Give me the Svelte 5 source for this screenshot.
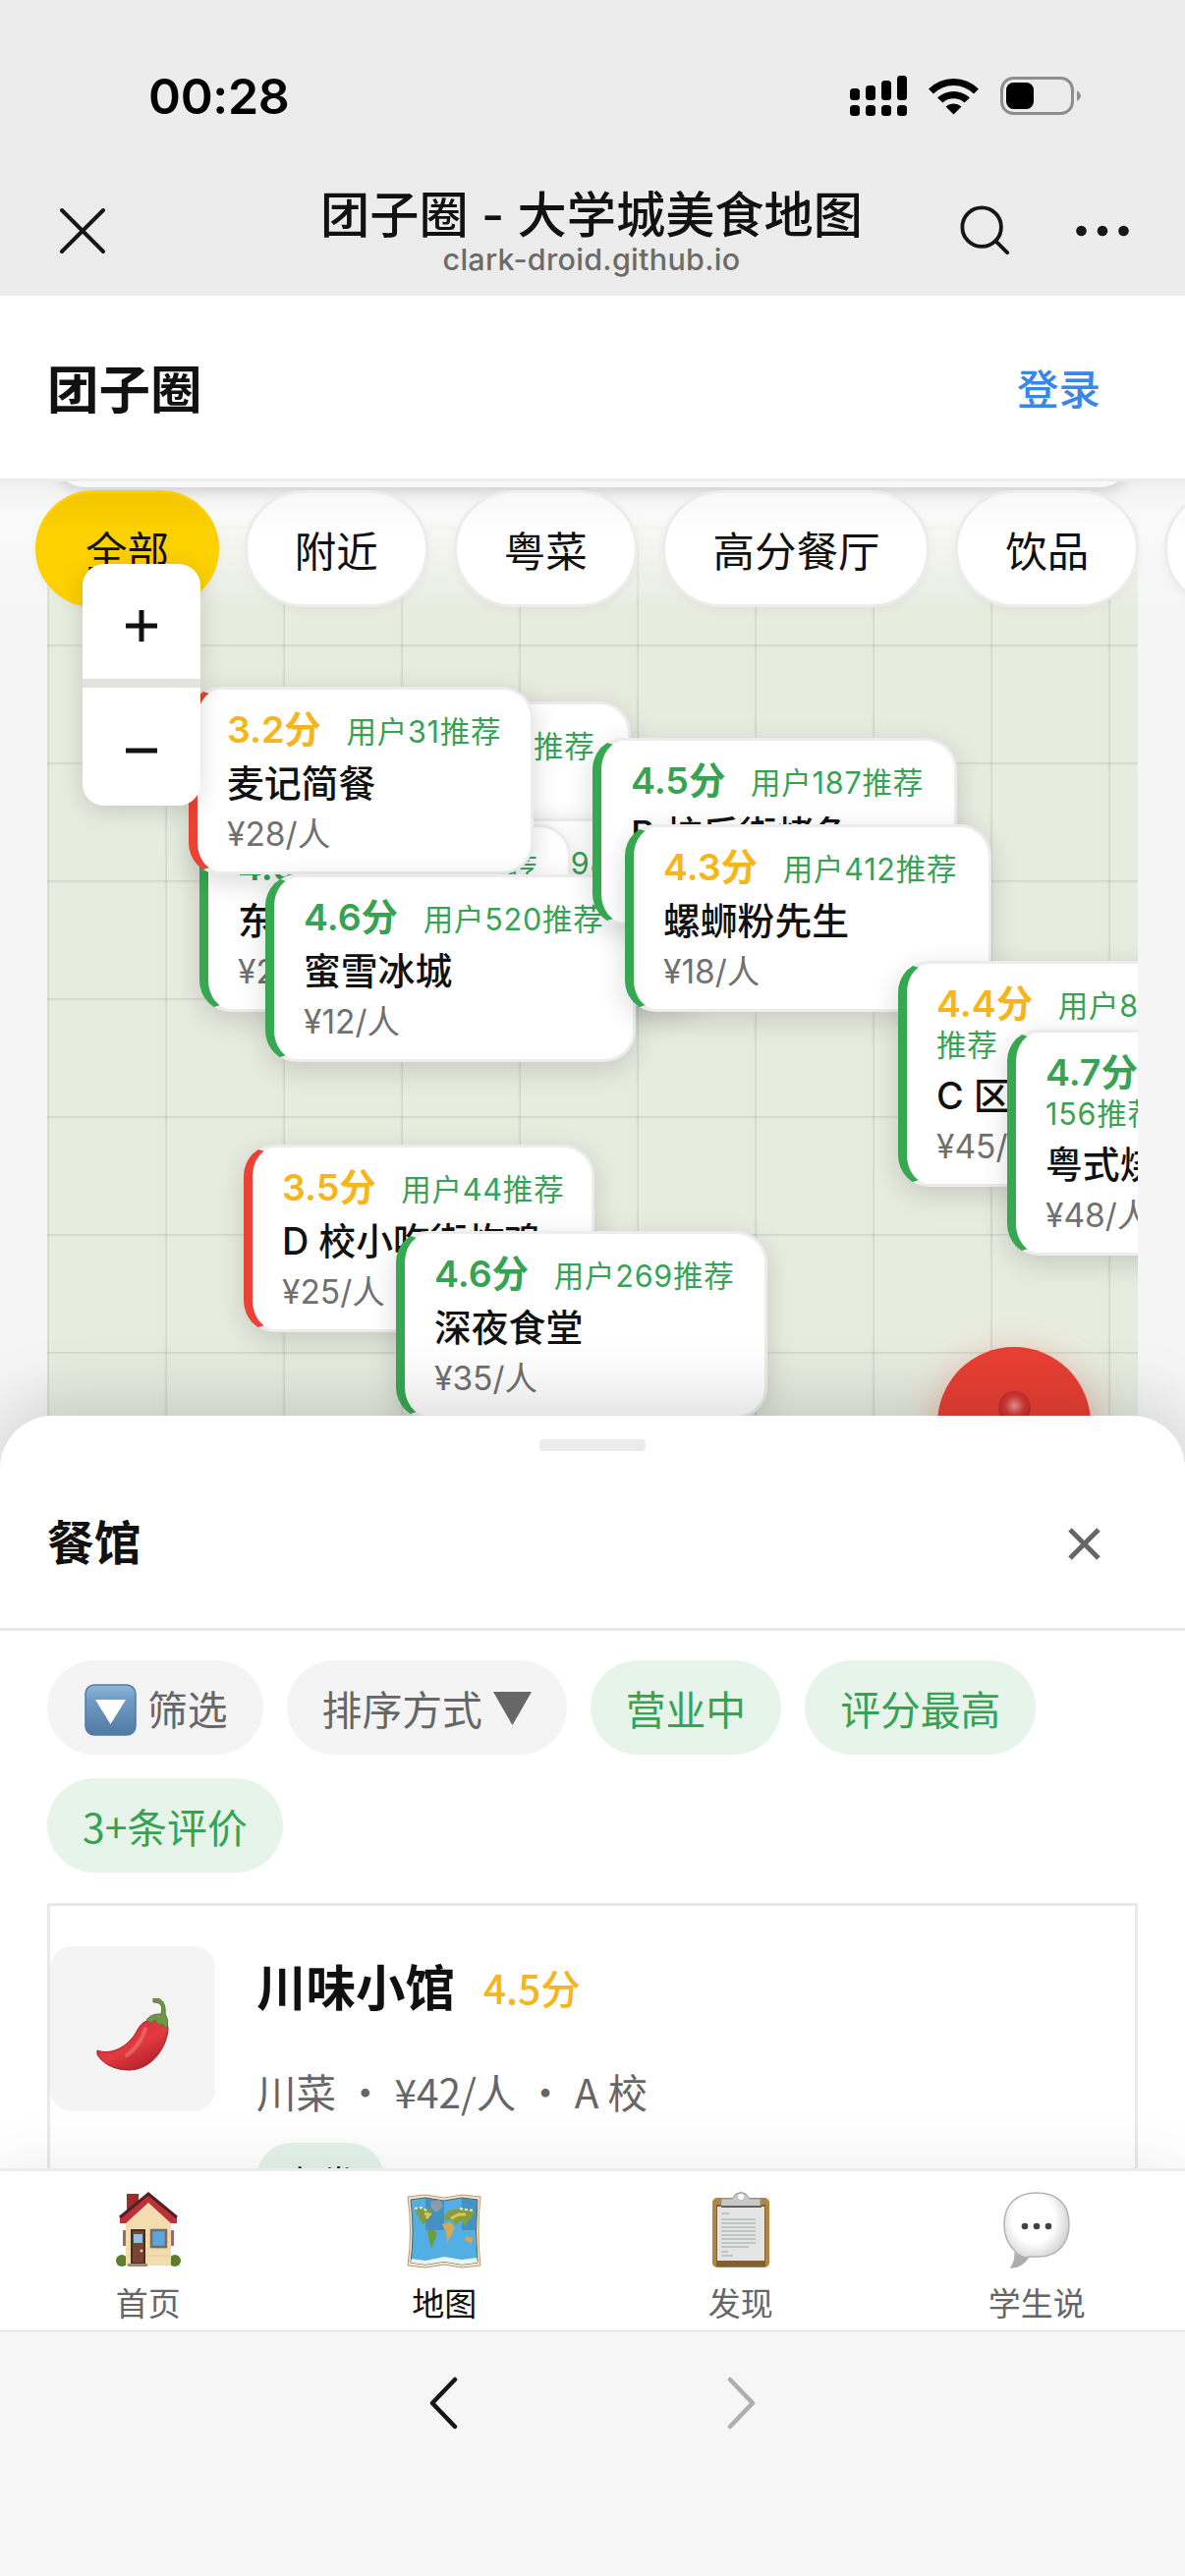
<script>
	/** Pins are listed bottom to top: later ones cover earlier ones. */
	const pins = [
		{ x: 234, y: 224, w: 360, score: '4.2分', tone: 'gold', tags: ['用户76推荐'], name: 'A 校轻食', price: '¥32/人' },
		{ x: 320, y: 343, w: 345, score: '4.1分', tone: 'gold', tags: ['用户98推荐'], name: '汤粉王', price: '¥20/人' },
		{ x: 155, y: 349, w: 378, score: '4.5分', tone: 'green', tags: ['用户326推荐'], name: '东北饺子', price: '¥26/人' },
		{ x: 144, y: 209, w: 351, score: '3.2分', tone: 'gold', edge: 'red', tags: ['用户31推荐'], name: '麦记简餐', price: '¥28/人' },
		{ x: 222, y: 400, w: 377, score: '4.6分', tone: 'green', tags: ['用户520推荐'], name: '蜜雪冰城', price: '¥12/人' },
		{ x: 555, y: 261, w: 371, score: '4.5分', tone: 'green', tags: ['用户187推荐'], name: 'B 校后街烤鱼', price: '¥55/人' },
		{ x: 588, y: 349, w: 373, score: '4.3分', tone: 'gold', tags: ['用户412推荐'], name: '螺蛳粉先生', price: '¥18/人' },
		{ x: 866, y: 488, w: 320, score: '4.4分', tone: 'gold', tags: ['用户88', '推荐'], name: 'C 区咖啡', price: '¥45/人' },
		{ x: 977, y: 558, w: 320, score: '4.7分', tone: 'green', tags: ['用户', '156推荐'], name: '粤式烧腊', price: '¥48/人' },
		{ x: 200, y: 675, w: 357, score: '3.5分', tone: 'gold', edge: 'red', tags: ['用户44推荐'], name: 'D 校小吃街炸鸡', price: '¥25/人' },
		{ x: 355, y: 763, w: 378, score: '4.6分', tone: 'green', tags: ['用户269推荐'], name: '深夜食堂', price: '¥35/人' }
	];

	const categories = ['全部', '附近', '粤菜', '高分餐厅', '饮品', '小吃'];
	let category = $state('全部');

	const filters = ['营业中', '评分最高', '3+条评价'];

	const tabs = [
		{ id: 'home', label: '首页' },
		{ id: 'map', label: '地图' },
		{ id: 'find', label: '发现' },
		{ id: 'talk', label: '学生说' }
	];
	let tab = $state('map');
</script>

<div class="screen">
	<div class="browser-top">
		<div class="status">
			<span class="time">00:28</span>
			<div class="status-icons">
				<svg class="signal" width="58" height="42" viewBox="0 0 58 42">
					<rect x="0" y="13" width="10" height="12" rx="3.5" />
					<rect x="16" y="10" width="10" height="15" rx="3.5" />
					<rect x="32" y="5" width="10" height="20" rx="3.5" />
					<rect x="48" y="0" width="10" height="25" rx="3.5" />
					<rect x="0" y="30" width="10" height="11" rx="3.5" />
					<rect x="16" y="30" width="10" height="11" rx="3.5" />
					<rect x="32" y="30" width="10" height="11" rx="3.5" />
					<rect x="48" y="30" width="10" height="11" rx="3.5" />
				</svg>
				<svg class="wifi" width="51" height="38" viewBox="0 0 51 38">
					<path d="M0 11.5A36 36 0 0 1 51 11.5L46 16.5A29 29 0 0 0 5 16.5Z" />
					<path d="M9 20.5A24 24 0 0 1 42 20.5L36.500 25.500A16.500 16.500 0 0 0 14.500 25.500Z" />
					<path d="M17.500 29.500A12 12 0 0 1 33.500 29.500L25.500 37.500Z" />
				</svg>
				<svg width="84" height="40" viewBox="0 0 84 40">
					<rect x="1.500" y="1.500" width="72" height="36" rx="12" fill="none" stroke="#8e8e8e" stroke-width="3" />
					<rect x="6" y="6" width="28" height="27" rx="7.500" />
					<path d="M78 14Q82 17 82 19.500T78 25Z" fill="#8e8e8e" />
				</svg>
			</div>
		</div>
		<div class="nav">
			<svg class="close" width="48" height="48" viewBox="0 0 48 48">
				<path d="M3 3L45 45M45 3L3 45" />
			</svg>
			<div class="titles">
				<div class="title">团子圈 - 大学城美食地图</div>
				<div class="host">clark-droid.github.io</div>
			</div>
			<svg class="find" width="52" height="52" viewBox="0 0 54 54">
				<circle cx="23" cy="23" r="20.500" />
				<path d="M37.500 37.500L50 50" />
			</svg>
			<svg class="more" width="54" height="12" viewBox="0 0 54 12">
				<circle cx="5.500" cy="6" r="5.300" />
				<circle cx="27" cy="6" r="5.300" />
				<circle cx="48.500" cy="6" r="5.300" />
			</svg>
		</div>
	</div>

	<header>
		<h1>团子圈</h1>
		<button class="login">登录</button>
	</header>

	<main>
		<div class="map">
			<div class="canvas">
				{#each pins as pin}
					<div
						class="pin"
						class:low={pin.edge === 'red'}
						style:left="{pin.x}px"
						style:top="{pin.y}px"
						style:width="{pin.w}px"
					>
						<div class="rating">
							<span class="score {pin.tone}">{pin.score}</span>
							<span class="tag">{pin.tags[0]}</span>
						</div>
						{#if pin.tags[1]}
							<div class="tag wrapped">{pin.tags[1]}</div>
						{/if}
						<div class="name">{pin.name}</div>
						<div class="price">{pin.price}</div>
					</div>
				{/each}
				<div class="locate">
					<span class="ball"></span>
				</div>
			</div>
			<div class="search-edge"></div>
			<div class="categories">
				{#each categories as c}
					<button class="chip" class:active={category === c} onclick={() => (category = c)}>{c}</button>
				{/each}
			</div>
			<div class="zoom">
				<button aria-label="放大">
					<svg width="32" height="32" viewBox="0 0 32 32"><path d="M0 16H32M16 0V32" /></svg>
				</button>
				<button aria-label="缩小">
					<svg width="32" height="32" viewBox="0 0 32 32"><path d="M0 16H32" /></svg>
				</button>
			</div>
		</div>

		<section class="sheet">
			<div class="handle"></div>
			<div class="sheet-head">
				<h2>餐馆</h2>
				<svg width="33" height="33" viewBox="0 0 33 33"><path d="M2 2L31 31M31 2L2 31" /></svg>
			</div>
			<div class="sheet-body">
				<div class="filters">
					<span class="pill">
						<svg class="funnel" width="53" height="53" viewBox="0 0 53 53">
							<defs>
								<linearGradient id="key" x1="0" y1="0" x2="0" y2="1">
									<stop offset="0" stop-color="#8db8dd" />
									<stop offset="0.3" stop-color="#6f9cc6" />
									<stop offset="1" stop-color="#517aa3" />
								</linearGradient>
							</defs>
							<rect x="1" y="1" width="51" height="51" rx="9" fill="url(#key)" stroke="#537ba2" stroke-width="1.500" />
							<path d="M11 16H42L26.500 41Z" fill="#fff" />
						</svg>
						筛选
					</span>
					<span class="pill">
						排序方式
						<svg class="caret" width="39" height="34" viewBox="0 0 39 34"><path d="M0 0H39L19.500 34Z" /></svg>
					</span>
					{#each filters as f}
						<span class="pill on">{f}</span>
					{/each}
				</div>

				<article>
					<div class="thumb">
						<svg width="74" height="74" viewBox="0 0 74 74">
							<defs>
								<linearGradient id="chili" x1="0.2" y1="0" x2="0.9" y2="1">
									<stop offset="0" stop-color="#d92b38" />
									<stop offset="0.5" stop-color="#e23a41" />
									<stop offset="1" stop-color="#a31722" />
								</linearGradient>
							</defs>
							<path d="M1 53C14 58 31 51 41 34C44 28 47 24 54 22C62 20 73 23 73 30C73 47 58 73 33 73C17 73 5 65 1 57Z" fill="url(#chili)" stroke="#9f1b23" />
							<path d="M50 31C46 43 40 52 31 58" fill="none" stroke="#f07a78" stroke-width="4" stroke-linecap="round" opacity="0.6" />
							<path d="M51 22C56 16 61 16 66 16C68 8 66 4 58 4L58 0C68 -1 71 7 70 16C73 21 73 25 72 31L67 26L64 28L60 22L55 25Z" fill="#719546" stroke="#547333" />
						</svg>
					</div>
					<div class="info">
						<div class="head">
							<h3>川味小馆</h3>
							<span class="stars">4.5分</span>
						</div>
						<div class="meta">
							<span>川菜</span><i>•</i><span>¥42/人</span><i>•</i><span>A 校</span>
						</div>
						<span class="badge">有券</span>
					</div>
				</article>
			</div>
		</section>
	</main>

	<nav class="tabs">
		{#each tabs as t}
			<button class:current={tab === t.id} onclick={() => (tab = t.id)}>
				<svg width="76" height="78" viewBox="0 0 76 78">
					{#if t.id === 'home'}
						<path d="M16 2H28V32H16Z" fill="#9c2f2a" />
						<circle cx="11" cy="70" r="6" fill="#5c7f2d" />
						<circle cx="65" cy="70" r="6" fill="#5c7f2d" />
						<path d="M12 39H17V55H12ZM59 39H64V55H59Z" fill="#9b6c65" />
						<path d="M15 26L38 9L61 26V75H15Z" fill="#f3ddb0" />
						<path d="M17 44H60M17 51H60M17 58H60M17 65H60" stroke="#e5ca98" />
						<path d="M38 1L67 25V32H61L38 11L15 32H9V25Z" fill="#bd3139" />
						<path d="M9 26L38 2L67 26" fill="none" stroke="#552025" stroke-width="3" />
						<path d="M20 38H35V74H20Z" fill="#4e2d21" />
						<path d="M22 40H33V72H22Z" fill="#7c4330" />
						<rect x="23" y="43" width="9" height="9" fill="#8fc2e4" />
						<circle cx="31" cy="60" r="1.500" fill="#efce7b" />
						<rect x="41" y="39" width="15" height="17" fill="#5aa6de" stroke="#796a62" stroke-width="2.500" />
						<path d="M17 73H37V76H17Z" fill="#9a8d79" />
					{:else if t.id === 'map'}
						<path d="M1 5L19 3L38 6L56 3L75 5Q71 40 75 75L56 77L38 74L19 77L1 75Q6 40 1 5Z" fill="#f3e5c8" stroke="#b59a79" />
						<path d="M4 8L19 6L38 9L56 6L72 8Q69 40 72 72L56 74L38 71L19 74L4 72Q8 40 4 8Z" fill="#53aee3" stroke="#655d55" />
						<path d="M19 6L38 9V39H19ZM56 6L72 8L70 39H56Z" fill="#387ca8" opacity="0.55" />
						<path d="M5 68L19 70L38 66L56 69L71 67L72 72L56 74L38 71L19 74L4 72Z" fill="#e9f5fa" />
						<path d="M8 17L13 16L24 18L26 23L20 29L17 34L13 28L10 21Z" fill="#819b42" />
						<path d="M24 10L34 8L37 15L30 21L25 17Z" fill="#8b9ba9" />
						<path d="M21 38L27 38L31 43L28 50L25 58L22 46Z" fill="#719a3e" />
						<path d="M38 25L43 19L53 17L69 19L68 24L62 30L60 35L55 29L50 34L45 28L39 30Z" fill="#899d3b" />
						<path d="M36 33L44 31L49 36L44 47L41 51L40 41Z" fill="#d4ab54" />
						<path d="M60 45L67 47L66 53L59 49Z" fill="#dda549" />
						<path d="M8 17L15 16L20 19M54 17L68 19" fill="none" stroke="#e1eaf0" stroke-width="2" stroke-dasharray="3 2" />
						<path d="M18 22L23 23L20 27M45 27L53 23L60 23" fill="none" stroke="#dcc657" stroke-width="3" />
					{:else if t.id === 'find'}
						<rect x="9" y="6" width="58" height="71" rx="5" fill="#b18545" />
						<path d="M13 13H63V76H13Z" fill="#806126" />
						<path d="M14 15H62V70H14Z" fill="#e4e4e4" />
						<path d="M18 22H26M18 28H53M18 32H53M18 36H53M18 40H53M18 44H53M18 48H53M18 52H53M18 56H46M18 61H25M18 65H30" stroke="#b8babb" stroke-width="1.400" />
						<path d="M18 7H29L33 2Q38 -1 43 2L47 7H58V15H18Z" fill="#c8c8c5" stroke="#969793" />
						<circle cx="38" cy="5" r="3" fill="#fff" />
						<path d="M18 14H59V16H18Z" fill="#62645f" />
					{:else}
						<defs>
							<radialGradient id="bubble" cx="0.45" cy="0.35" r="0.65">
								<stop offset="0.5" stop-color="#fff" />
								<stop offset="1" stop-color="#c4c4c4" />
							</radialGradient>
						</defs>
						<path d="M38 1C60 1 71 13 71 33C71 53 59 66 40 66L30 66C26 72 20 77 12 77Q17 70 16 60C8 53 5 44 5 33C5 13 17 1 38 1Z" fill="url(#bubble)" stroke="#b3b3b3" stroke-width="1.500" />
						<path d="M17 61Q24 67 30 66C26 72 20 77 12 77Q17 70 17 61Z" fill="#a5a5a5" opacity="0.8" />
						<circle cx="26" cy="35" r="3.300" fill="#414141" />
						<circle cx="38" cy="35" r="3.300" fill="#414141" />
						<circle cx="50" cy="35" r="3.300" fill="#414141" />
					{/if}
				</svg>
				<span>{t.label}</span>
			</button>
		{/each}
	</nav>

	<footer>
		<svg width="32" height="54" viewBox="0 0 32 54"><path d="M28 3L5 27L28 51" stroke="#161616" /></svg>
		<svg width="32" height="54" viewBox="0 0 32 54"><path d="M4 3L27 27L4 51" stroke="#aeaeae" /></svg>
	</footer>
</div>

<style>
	:global(body) {
		margin: 0;
		background: #f6f6f6;
	}

	.screen {
		width: 1206px;
		height: 2622px;
		display: flex;
		flex-direction: column;
		overflow: hidden;
		color: #111;
		font-family: 'Noto Sans CJK SC', sans-serif;
	}

	.screen * {
		box-sizing: border-box;
	}

	button {
		border: 0;
		padding: 0;
		margin: 0;
		background: none;
		color: inherit;
		font: inherit;
	}

	h1,
	h2,
	h3 {
		margin: 0;
	}

	svg {
		display: block;
		flex: none;
	}

	.browser-top {
		flex: none;
		height: 301px;
		background: #ececec;
	}

	.status {
		height: 176px;
		padding: 20px 104px 0 151px;
		display: flex;
		align-items: center;
		justify-content: space-between;
	}

	.time {
		font: 600 50px/60px Inter, sans-serif;
		letter-spacing: -0.3px;
		color: #000;
	}

	.status-icons {
		display: flex;
		align-items: center;
	}

	.signal {
		margin-right: 22px;
	}

	.wifi {
		margin-right: 22px;
	}

	.nav {
		height: 118px;
		padding: 0 57px 0 60px;
		display: flex;
		align-items: center;
	}

	.nav svg {
		fill: none;
		stroke: #161616;
		stroke-width: 4;
		stroke-linecap: round;
	}

	.titles {
		flex: 1;
		padding: 3px 0 0 111px;
		margin-right: -8px;
		text-align: center;
		white-space: nowrap;
	}

	.title {
		font-size: 50.2px;
		line-height: 54px;
		font-weight: 500;
		font-family: Inter, 'Noto Sans CJK SC', sans-serif;
	}

	.host {
		font: 500 30.5px/36px Inter, sans-serif;
		letter-spacing: 0.3px;
		color: #6b6b6b;
	}

	.find {
		margin-right: 66px;
	}

	.nav .more {
		fill: #161616;
		stroke: none;
	}

	header {
		flex: none;
		height: 189px;
		padding: 0 86px 2px 48px;
		display: flex;
		align-items: center;
		justify-content: space-between;
		background: #fff;
		border-bottom: 3px solid #ececec;
	}

	h1 {
		font-size: 52.5px;
		line-height: 72px;
		font-weight: 700;
	}

	.login {
		font-size: 42.5px;
		font-weight: 500;
		color: #3886e8;
	}

	main {
		flex: none;
		height: 1717px;
		overflow: hidden;
		background: #f5f5f6;
	}

	.map {
		position: relative;
		height: 951px;
		padding: 0 48px;
	}

	.canvas {
		position: relative;
		height: 100%;
		overflow: hidden;
		background-color: #e8ecdf;
		background-image: linear-gradient(90deg, transparent 117px, rgba(0, 0, 0, 0.1) 120px),
			linear-gradient(0deg, transparent 117px, rgba(0, 0, 0, 0.1) 120px);
		background-size: 120px 120px;
		background-position: 2px 46px;
	}

	.pin {
		position: absolute;
		padding: 17px 0 16px 30px;
		border: 3px solid #ececee;
		border-left: 9px solid #36a852;
		border-radius: 32px;
		background: #fff;
		box-shadow: 0 8px 28px rgba(0, 0, 0, 0.15);
		font-family: Inter, 'Noto Sans CJK SC', sans-serif;
		white-space: nowrap;
	}

	.pin.low {
		border-left-color: #ea4335;
	}

	.rating {
		height: 48px;
		line-height: 48px;
	}

	.score {
		font-size: 37.5px;
		font-weight: 600;
		margin-right: 21px;
	}

	.gold {
		color: #f6b51b;
	}

	.green {
		color: #36a354;
	}

	.tag {
		font-size: 30.5px;
		letter-spacing: 0.8px;
		color: #36a354;
	}

	.wrapped {
		height: 39px;
		line-height: 36px;
	}

	.name {
		font-size: 37.8px;
		line-height: 60px;
		font-weight: 500;
	}

	.price {
		font-size: 33.5px;
		line-height: 44px;
		color: #707070;
	}

	.locate {
		position: absolute;
		left: 906px;
		top: 881px;
		width: 156px;
		height: 156px;
		padding-top: 45px;
		border-radius: 50%;
		background: #e83f33;
		box-shadow: 0 9px 36px rgba(234, 67, 53, 0.35);
	}

	.ball {
		display: block;
		width: 33px;
		height: 33px;
		margin: 0 auto;
		border-radius: 50%;
		background: radial-gradient(circle at 50% 45%, #ee9a92 0, #d93a35 40%, #b4262a 80%, #c93530 100%);
	}

	/* bottom rim of the search box that has scrolled under the header */
	.search-edge {
		position: absolute;
		inset: 0 0 auto;
		height: 130px;
		overflow: hidden;
		background: linear-gradient(#efefef 0, #f4f4f4 14px, rgba(250, 250, 250, 0.95) 34px, rgba(250, 250, 250, 0));
	}

	.search-edge::before {
		content: '';
		position: absolute;
		inset: -60px 54px auto;
		height: 66px;
		border-radius: 48px;
		background: #f8f8f8;
		box-shadow: 0 4px 14px rgba(0, 0, 0, 0.15);
	}

	.categories {
		position: absolute;
		inset: 0 0 auto;
		padding: 9px 0 0 36px;
		height: 150px;
		display: flex;
		gap: 25.8px;
		overflow: hidden;
	}

	.chip {
		flex: none;
		height: 119px;
		padding: 0 48px;
		border: 3px solid #ececec;
		border-radius: 60px;
		background: linear-gradient(#f8f8f8, #fff 40px);
		font-size: 42.5px;
		line-height: 60px;
		box-shadow: 0 3px 10px rgba(0, 0, 0, 0.04);
	}

	.chip.active {
		border-color: #fccf00;
		background: linear-gradient(#f3c500, #fdd000 36px);
	}

	.zoom {
		position: absolute;
		left: 84px;
		top: 84px;
		width: 120px;
		height: 246px;
		display: flex;
		flex-direction: column;
		border-radius: 22px;
		overflow: hidden;
		box-shadow: 0 6px 24px rgba(0, 0, 0, 0.14);
	}

	.zoom button {
		height: 120px;
		display: flex;
		align-items: center;
		justify-content: center;
		background: #fff;
	}

	.zoom button:first-child {
		height: 126px;
		padding-top: 9px;
		border-bottom: 9px solid rgba(226, 226, 222, 0.9);
		background-clip: padding-box;
	}

	.zoom button:last-child {
		padding-top: 8px;
	}

	.zoom path {
		stroke: #111;
		stroke-width: 5;
	}

	.sheet {
		position: relative;
		height: 766px;
		display: flex;
		flex-direction: column;
		border-radius: 54px 54px 0 0;
		background: #fff;
		box-shadow: 0 -12px 72px rgba(0, 0, 0, 0.16);
	}

	.handle {
		flex: none;
		width: 108px;
		height: 12px;
		margin: 24px auto 0;
		border-radius: 4px;
		background: #ebebeb;
	}

	.sheet-head {
		flex: none;
		height: 183px;
		padding: 4px 86px 0 48px;
		display: flex;
		align-items: center;
		justify-content: space-between;
		border-bottom: 3px solid #e9e9e9;
	}

	.sheet-head svg {
		margin-top: 4px;
	}

	.sheet-head path {
		fill: none;
		stroke: #666;
		stroke-width: 5;
	}

	h2 {
		font-size: 47.8px;
		line-height: 66px;
		margin-bottom: 2px;
		font-weight: 700;
	}

	.sheet-body {
		padding: 30px 48px 0;
	}

	.filters {
		display: flex;
		flex-wrap: wrap;
		gap: 24px;
	}

	.pill {
		height: 96px;
		padding: 2px 36px 0;
		display: flex;
		align-items: center;
		gap: 11px;
		border-radius: 48px;
		background: #f4f4f4;
		color: #666;
		font-size: 40.8px;
		line-height: 60px;
	}

	.pill.on {
		background: #e6f4ea;
		color: #36a354;
	}

	.funnel {
		margin: 3px 0 0 2px;
	}

	.caret {
		fill: #666;
	}

	article {
		margin-top: 31px;
		height: 400px;
		padding: 41px 0;
		display: flex;
		gap: 42px;
		border: 3px solid #e9e9e9;
	}

	.thumb {
		flex: none;
		width: 168px;
		height: 168px;
		display: flex;
		align-items: center;
		justify-content: center;
		padding-top: 12px;
		border-radius: 22px;
		background: #f4f4f4;
	}

	.info {
		display: flex;
		flex-direction: column;
		align-items: flex-start;
	}

	.head {
		height: 78px;
		display: flex;
		align-items: center;
		gap: 29px;
	}

	h3 {
		font-size: 50.5px;
		line-height: 76px;
		font-weight: 700;
	}

	.stars {
		padding-top: 5px;
		font-size: 40.5px;
		line-height: 60px;
		font-weight: 500;
		color: #f6b51b;
	}

	.meta {
		height: 60px;
		margin-top: 40px;
		display: flex;
		font-size: 40.5px;
		line-height: 60px;
		color: #666;
	}

	.meta i {
		width: 59.5px;
		text-align: center;
		font-style: normal;
	}

	.badge {
		height: 72px;
		margin-top: 22px;
		padding: 0 29px;
		border-radius: 36px;
		background: #e4f3e9;
		font-size: 36px;
		line-height: 79px;
	}

	.tabs {
		position: relative;
		flex: none;
		height: 166px;
		padding-top: 21px;
		display: grid;
		grid-template-columns: repeat(4, 1fr);
		align-items: start;
		border-top: 3px solid #ececec;
		border-bottom: 1px solid #dedede;
		background: #fff;
		box-shadow: 0 -6px 60px rgba(0, 0, 0, 0.07);
	}

	.tabs button {
		display: flex;
		flex-direction: column;
		align-items: center;
		color: #666;
		font-size: 33px;
		line-height: 48px;
	}

	.tabs span {
		margin-top: 10px;
	}

	.tabs .current {
		color: #111;
	}

	footer {
		position: relative;
		flex: 1;
		padding: 46px 0 0 435px;
		display: flex;
		align-items: flex-start;
		gap: 272px;
		background: #f6f6f6;
	}

	footer path {
		fill: none;
		stroke-width: 4.5;
		stroke-linecap: round;
		stroke-linejoin: round;
	}
</style>
